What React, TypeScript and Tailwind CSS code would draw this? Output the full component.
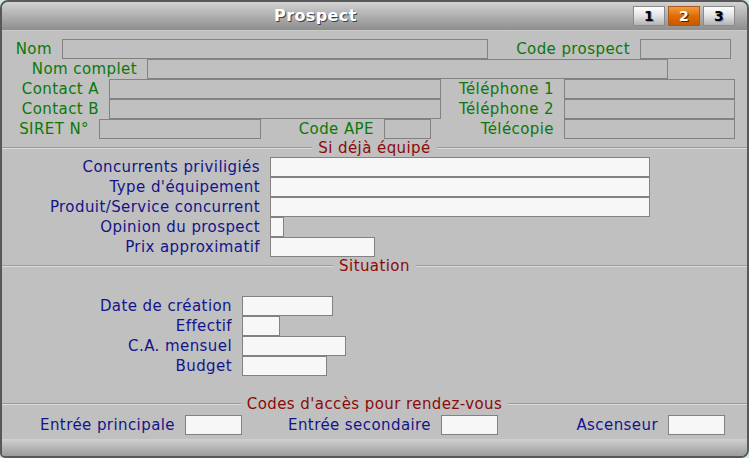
import React from "react";

const green = "text-[#0b780b]";
const navy = "text-[#14148a]";

function Box({ w, light, className = "" }: { w: string; light?: boolean; className?: string }) {
  return (
    <div
      className={`${w} h-[20px] border border-[#828282] shrink-0 ${
        light ? "bg-[#f7f7f7]" : "bg-[#c0c0c0]"
      } ${className}`}
    />
  );
}

function Lbl({ w, color, children }: { w: string; color: string; children: React.ReactNode }) {
  return (
    <span className={`${w} ${color} shrink-0 text-right pr-[10px] whitespace-nowrap`}>{children}</span>
  );
}

function Sep({ title, className = "" }: { title: string; className?: string }) {
  return (
    <div className={`flex items-center h-[18px] ${className}`}>
      <div className="flex-1 border-t border-t-[#9a9a9a] border-b border-b-[#dcdcdc]" />
      <span className="px-[6px] text-[#8a0a0a] whitespace-nowrap">{title}</span>
      <div className="flex-1 border-t border-t-[#9a9a9a] border-b border-b-[#dcdcdc]" />
    </div>
  );
}

function TabBtn({ n, active }: { n: string; active?: boolean }) {
  return (
    <div
      className={`w-[32px] h-[20px] flex items-center justify-center border font-bold text-[14px] ${
        active
          ? "bg-gradient-to-b from-[#f59a3a] via-[#e06c00] to-[#c85800] border-[#a85a20] text-white [text-shadow:1px_1px_0_#3a2a10]"
          : "bg-gradient-to-b from-[#ffffff] via-[#e2e2e2] to-[#b4b4b4] border-[#8a8a8a] text-black [text-shadow:1px_1px_0_#7a8ab0]"
      }`}
    >
      {n}
    </div>
  );
}

export default function App() {
  return (
    <div className="w-[749px] h-[458px] bg-[#cfe8e6] font-['DejaVu_Sans',Verdana,sans-serif] text-[15px] tracking-[0.42px] leading-[20px]">
      <div className="w-[749px] h-[458px] rounded-[8px] rounded-bl-[5px] border-2 border-[#585858] bg-[#c0c0c0] flex flex-col overflow-hidden">
        {/* title bar */}
        <div className="h-[29px] shrink-0 flex items-center bg-gradient-to-b from-[#d2d2d2] to-[#8e8e8e] border-b border-b-[#cacaca]">
          <span className="ml-[272px] font-bold text-[16px] tracking-[0.4px] text-white [text-shadow:1px_1px_0_#3c4050]">
            Prospect
          </span>
          <div className="ml-auto mr-[12px] mt-[-1px] flex gap-[3px]">
            <TabBtn n="1" />
            <TabBtn n="2" active />
            <TabBtn n="3" />
          </div>
        </div>

        {/* identity block */}
        <div className="pt-[8px] flex flex-col">
          <div className="flex items-center h-[20px]">
            <Lbl w="w-[60px]" color={green}>Nom</Lbl>
            <Box w="w-[426px]" />
            <Lbl w="w-[152px]" color={green}>Code prospect</Lbl>
            <Box w="w-[91px]" />
          </div>
          <div className="flex items-center h-[20px]">
            <Lbl w="w-[145px]" color={green}>Nom complet</Lbl>
            <Box w="w-[521px]" />
          </div>
          <div className="flex items-center h-[20px]">
            <Lbl w="w-[107px]" color={green}>Contact A</Lbl>
            <Box w="w-[332px]" />
            <Lbl w="w-[123px]" color={green}>Téléphone 1</Lbl>
            <Box w="w-[171px]" />
          </div>
          <div className="flex items-center h-[20px]">
            <Lbl w="w-[107px]" color={green}>Contact B</Lbl>
            <Box w="w-[332px]" />
            <Lbl w="w-[123px]" color={green}>Téléphone 2</Lbl>
            <Box w="w-[171px]" />
          </div>
          <div className="flex items-center h-[20px]">
            <Lbl w="w-[97px]" color={green}>SIRET N°</Lbl>
            <Box w="w-[162px]" />
            <Lbl w="w-[123px]" color={green}>Code APE</Lbl>
            <Box w="w-[47px]" />
            <Lbl w="w-[133px]" color={green}>Télécopie</Lbl>
            <Box w="w-[171px]" />
          </div>
        </div>

        <Sep title="Si déjà équipé" />

        <div className="flex flex-col">
          {[
            ["Concurrents priviligiés", "w-[380px]"],
            ["Type d'équipement", "w-[380px]"],
            ["Produit/Service concurrent", "w-[380px]"],
            ["Opinion du prospect", "w-[14px]"],
            ["Prix approximatif", "w-[105px]"],
          ].map(([label, w]) => (
            <div key={label} className="flex items-center h-[20px]">
              <Lbl w="w-[268px]" color={navy}>{label}</Lbl>
              <Box w={w} light />
            </div>
          ))}
        </div>

        <Sep title="Situation" />

        <div className="mt-[21px] flex flex-col">
          {[
            ["Date de création", "w-[91px]"],
            ["Effectif", "w-[38px]"],
            ["C.A. mensuel", "w-[104px]"],
            ["Budget", "w-[85px]"],
          ].map(([label, w]) => (
            <div key={label} className="flex items-center h-[20px]">
              <Lbl w="w-[240px]" color={navy}>{label}</Lbl>
              <Box w={w} light />
            </div>
          ))}
        </div>

        <Sep title="Codes d'accès pour rendez-vous" className="mt-[19px]" />

        <div className="mt-[2px] flex items-center h-[20px]">
          <Lbl w="w-[183px]" color={navy}>Entrée principale</Lbl>
          <Box w="w-[57px]" light />
          <Lbl w="w-[199px]" color={navy}>Entrée secondaire</Lbl>
          <Box w="w-[57px]" light />
          <Lbl w="w-[170px]" color={navy}>Ascenseur</Lbl>
          <Box w="w-[57px]" light />
        </div>

        {/* bottom bar */}
        <div className="mt-auto h-[17px] shrink-0 bg-gradient-to-b from-[#d0d0d0] to-[#9c9c9c]" />
      </div>
    </div>
  );
}
